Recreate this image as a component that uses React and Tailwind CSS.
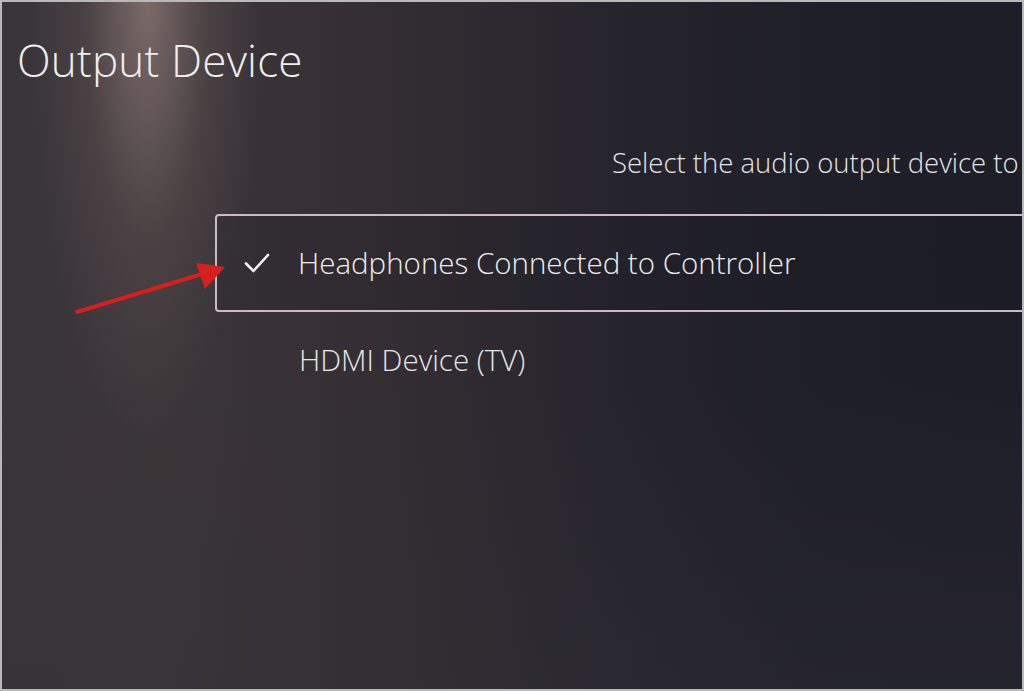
import React from "react";

const bg =
  "bg-[radial-gradient(ellipse_115px_430px_at_145px_0px,rgba(150,128,124,0.7),rgba(110,95,95,0.28)_55%,transparent),linear-gradient(90deg,#3a3539_0%,#3c3639_15%,#352f34_35%,#26242d_60%,#1f1f29_80%,#1e1e28_100%)]";

function Check() {
  return (
    <svg width="28" height="22" viewBox="0 0 28 22" fill="none">
      <path d="M3 11.5 L10.5 19 L25 3" stroke="#f2f2f2" strokeWidth="2.6" strokeLinecap="round" strokeLinejoin="round" />
    </svg>
  );
}

function Arrow() {
  return (
    <svg className="absolute left-0 top-0 pointer-events-none" width="240" height="330" viewBox="0 0 240 330">
      <path d="M75 310 L200 272" stroke="#d61f1f" strokeWidth="4" strokeLinecap="round" />
      <path d="M223 265 L194 261 L203 287 Z" fill="#d61f1f" />
    </svg>
  );
}

export default function App() {
  return (
    <div
      className={`relative w-[1024px] h-[691px] overflow-hidden border-2 border-[#b9b9b9] ${bg} font-['Open_Sans',sans-serif] font-light text-[#eeeeee]`}
    >
      <div className="absolute inset-0 bg-[linear-gradient(180deg,transparent_0%,transparent_55%,rgba(50,48,54,0.35)_100%)]" />
      <div className="relative flex flex-col">
        <h1 className="pl-[15px] pt-[28px] text-[44px] leading-[60px] font-light tracking-[0.2px]">Output Device</h1>
        <p className="pl-[610px] mt-[54px] text-[27.5px] leading-[38px] whitespace-nowrap text-[#e4e4e4]">
          Select the audio output device to be used
        </p>
        <div className="ml-[213px] mt-[32px] w-[900px] h-[98px] rounded-[4px] border-2 border-[#cdb9c3] flex items-center pl-[26px] bg-[rgba(20,20,28,0.15)]">
          <Check />
          <span className="ml-[27px] text-[29.5px] leading-[40px] whitespace-nowrap">Headphones Connected to Controller</span>
        </div>
        <div className="ml-[297px] mt-[28px] text-[29.5px] leading-[40px] whitespace-nowrap text-[#e6e6e6]">
          HDMI Device (TV)
        </div>
      </div>
      <Arrow />
    </div>
  );
}
